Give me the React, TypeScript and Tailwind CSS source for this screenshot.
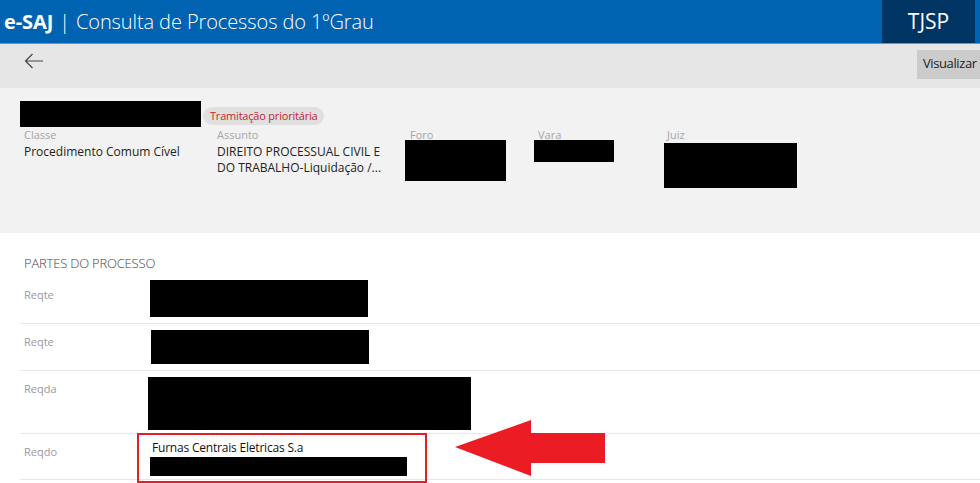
import React from "react";

const font = { fontFamily: '"Open Sans", "Noto Sans", sans-serif' };

function Redacted({ className }: { className: string }) {
  return <div className={`bg-black ${className}`} />;
}

function Field({ label, children, className }: { label: string; children: React.ReactNode; className: string }) {
  return (
    <div className={className}>
      <div className="text-[11px] leading-[14px] text-[#a6a6a6]">{label}</div>
      {children}
    </div>
  );
}

function ParteRow({ label, children, className }: { label: string; children: React.ReactNode; className: string }) {
  return (
    <div className={`flex items-start border-b border-[#e8e8e8] ${className}`}>
      <div className="w-[130px] shrink-0 pl-1 pt-[11px] text-[11px] leading-[14px] text-[#9a9a9a]">{label}</div>
      {children}
    </div>
  );
}

export default function App() {
  return (
    <div className="relative h-[483px] w-[980px] overflow-hidden bg-white" style={font}>
      {/* header */}
      <header className="flex h-[44px] border-b border-[#5b9bd5] bg-[#0063b1] text-white">
        <div className="flex flex-1 items-center pl-1 text-[20px] leading-none tracking-[-0.1px]">
          <span className="font-bold">e-SAJ</span>
          <span className="mx-[6px] font-light">|</span>
          <span className="font-light">Consulta de Processos do 1ºGrau</span>
        </div>
        <div className="flex w-[93px] items-center justify-center bg-[#003463] text-[21px] font-normal">TJSP</div>
        <div className="w-[5px]" />
      </header>

      {/* toolbar */}
      <div className="flex h-[44px] items-center justify-between bg-[#e6e6e6]">
        <svg className="ml-[24px] mb-[10px]" width="20" height="16" viewBox="0 0 20 16" fill="none" stroke="#444" strokeWidth="1.2">
          <path d="M19 8H1.5M8.5 1L1.5 8l7 7" />
        </svg>
        <button className="mb-[4px] h-[29px] w-[63px] overflow-hidden whitespace-nowrap bg-[#cccccc] pl-[6px] text-left text-[13px] tracking-[-0.4px] text-[#222]">
          Visualizar
        </button>
      </div>

      {/* dados do processo */}
      <section className="h-[145px] bg-[#f2f2f2] pt-[13px]">
        <div className="flex items-start pl-[20px]">
          <Redacted className="h-[26px] w-[181px]" />
          <span className="ml-[2px] mt-[6px] rounded-full bg-[#e0e0e0] px-[7px] py-[1px] text-[11px] leading-[16px] tracking-[-0.2px] text-[#c4262e]">
            Tramitação prioritária
          </span>
        </div>
        <div className="mt-[1px] flex items-start pl-[24px]">
          <Field label="Classe" className="w-[193px]">
            <div className="mt-[2px] text-[12px] leading-[16px] text-[#222]">Procedimento Comum Cível</div>
          </Field>
          <Field label="Assunto" className="w-[193px]">
            <div className="mt-[2px] w-[170px] text-[12px] leading-[16px] text-[#222]">
              DIREITO PROCESSUAL CIVIL E<br />DO TRABALHO-Liquidação /...
            </div>
          </Field>
          <Field label="Foro" className="w-[128px]">
            <Redacted className="-ml-[5px] mt-[-2px] h-[41px] w-[101px]" />
          </Field>
          <Field label="Vara" className="w-[129px]">
            <Redacted className="-ml-[4px] mt-[-2px] h-[22px] w-[80px]" />
          </Field>
          <Field label="Juiz" className="w-[150px]">
            <Redacted className="-ml-[3px] mt-[1px] h-[45px] w-[133px]" />
          </Field>
        </div>
        <div className="mt-[14px] border-t border-[#f0f0f0]" />
      </section>

      {/* partes */}
      <section className="pl-[20px] pt-[22px]">
        <h2 className="pl-1 text-[13px] font-light leading-[16px] tracking-[-0.2px] text-[#444]">PARTES DO PROCESSO</h2>
        <div className="mt-[6px]">
          <ParteRow label="Reqte" className="h-[47px]">
            <Redacted className="mt-[3px] h-[37px] w-[218px]" />
          </ParteRow>
          <ParteRow label="Reqte" className="h-[47px]">
            <Redacted className="ml-[1px] mt-[6px] h-[34px] w-[218px]" />
          </ParteRow>
          <ParteRow label="Reqda" className="h-[63px]">
            <Redacted className="-ml-[2px] mt-[6px] h-[53px] w-[323px]" />
          </ParteRow>
          <ParteRow label="Reqdo" className="h-[46px]">
            <div className="-ml-[13px] -mt-[1px] h-[50px] w-[290px] border-2 border-[#e31e24] pl-[13px] pt-[5px]">
              <div className="text-[12px] leading-[16px] tracking-[-0.2px] text-[#111]">Furnas Centrais Eletricas S.a</div>
              <Redacted className="ml-[-2px] mt-[1px] h-[19px] w-[257px]" />
            </div>
          </ParteRow>
        </div>
      </section>

      {/* seta de destaque */}
      <svg className="absolute left-[454px] top-[419px]" width="153" height="59" viewBox="0 0 153 59">
        <polygon points="1,28 77,1 77,14 151,14 151,44 77,44 77,57" fill="#ec1c24" />
      </svg>
    </div>
  );
}
